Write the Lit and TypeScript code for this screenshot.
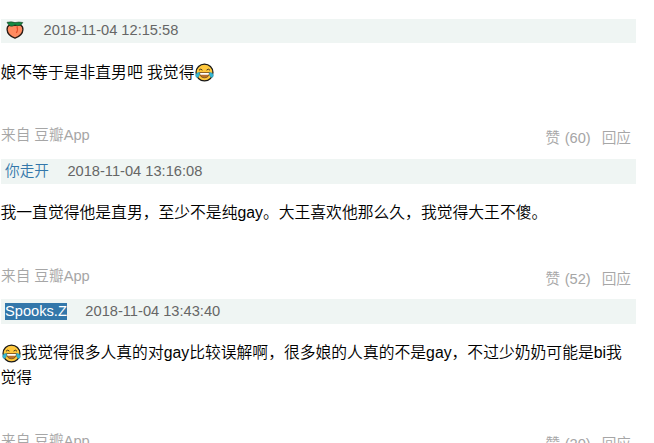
import { LitElement, html, css, svg } from "lit";
import { customElement, property } from "lit/decorators.js";

interface Comment {
  author: string;
  selected?: boolean;
  time: string;
  body: string;
  votes: number;
}

const comments: Comment[] = [
  { author: "🍑", time: "2018-11-04 12:15:58", body: "娘不等于是非直男吧 我觉得😂", votes: 60 },
  {
    author: "你走开",
    time: "2018-11-04 13:16:08",
    body: "我一直觉得他是直男，至少不是纯gay。大王喜欢他那么久，我觉得大王不傻。",
    votes: 52,
  },
  {
    author: "Spooks.Z",
    selected: true,
    time: "2018-11-04 13:43:40",
    body: "😂我觉得很多人真的对gay比较误解啊，很多娘的人真的不是gay，不过少奶奶可能是bi我觉得",
    votes: 20,
  },
];

const joyArt = svg`
  <circle cx="10" cy="10" r="8.9" fill="#ffc83d" stroke="#191919" stroke-width="1.3"/>
  <path d="M4.2 7.6Q5.9 5.4 7.8 7.5M12.2 7.5Q14.1 5.4 15.8 7.6" fill="none" stroke="#372b1b" stroke-width="1"/>
  <path d="M4.8 10.1H15.2Q14.8 15.6 10 15.6Q5.2 15.6 4.8 10.1Z" fill="#b8702a" stroke="#5b3b18" stroke-width=".7"/>
  <path d="M5.3 10.5H14.7L14.3 12.3H5.7Z" fill="#fff"/>
  <path d="M4.9 9.8Q1 10.1.6 13Q.8 15.8 3 15.2Q5.1 14.2 4.9 9.8ZM15.1 9.8Q19 10.1 19.4 13Q19.2 15.8 17 15.2Q14.9 14.2 15.1 9.8Z" fill="#35b8d5" stroke="#20788e" stroke-width=".4"/>`;

const peachArt = svg`
  <path d="M9 4.4C4.6 2.2.9 4.6 1.1 8.6C1.3 12.6 5.1 15.7 9 17.1C12.9 15.7 16.7 12.6 16.9 8.6C17.1 4.6 13.4 2.2 9 4.4Z" fill="#ff8b60" stroke="#2b1b14" stroke-width="1.3"/>
  <path d="M10.9 5.3Q12.3 9 10.4 12" fill="none" stroke="#e34b29" stroke-width="1.1"/>
  <path d="M1 1.3Q5.8.3 9 1.6Q12.6.6 16.8 1.5Q15.2 5 11.4 4.7L9 3.8Q7 5.9 4.2 5Q2 3.8 1 1.3Z" fill="#158a43" stroke="#14371f" stroke-width=".6"/>`;

@customElement("emoji-glyph")
class EmojiGlyph extends LitElement {
  @property() kind = "joy";

  static styles = css`
    :host { display: inline-block; line-height: 0; }
    .joy { display: block; width: 19px; height: 19px; margin: 0 1px; }
    .peach { display: block; width: 18px; height: 18px; }
  `;

  render() {
    return this.kind === "peach"
      ? html`<svg class="peach" viewBox="0 0 18 18" role="img" aria-label="peach">${peachArt}</svg>`
      : html`<svg class="joy" viewBox="0 0 20 20" role="img" aria-label="joy">${joyArt}</svg>`;
  }
}

@customElement("comment-item")
class CommentItem extends LitElement {
  @property({ attribute: false }) comment!: Comment;

  static styles = css`
    :host { display: block; }
    .head {
      display: flex;
      align-items: center;
      gap: 18.5px;
      box-sizing: border-box;
      height: 24.4px;
      margin: 0 18px 0 1px;
      padding: 0 0 0.6px 4px;
      background: #eff5f3;
      color: #666;
      font-size: 14.65px;
      line-height: 17px;
    }
    .author { color: #37a; }
    .author emoji-glyph { display: block; margin: 0 1px 2px; }
    .selected { background: #37a; color: #fff; }
    .body {
      margin: 16.6px 30px 0 0;
      padding-left: 0.5px;
      color: #000;
      font-size: 15.8px;
      line-height: 25px;
      word-break: break-all;
    }
    .body emoji-glyph { vertical-align: middle; height: 19px; margin: -2px 0 0; }
    .foot {
      display: flex;
      justify-content: space-between;
      height: 24px;
      margin: 38.4px 23px 11.8px 1px;
      color: #a6a6a6;
      font-size: 14.65px;
      line-height: 24px;
    }
    .actions { display: flex; gap: 11px; padding-top: 3px; }
    .votes { word-spacing: 0.5px; }
  `;

  private rich(text: string) {
    return text.split(/(😂|🍑)/u).map((part) =>
      part === "😂" ? html`<emoji-glyph kind="joy"></emoji-glyph>`
      : part === "🍑" ? html`<emoji-glyph kind="peach"></emoji-glyph>`
      : part);
  }

  render() {
    const c = this.comment;
    return html`
      <div class="head">
        <span class="author ${c.selected ? "selected" : ""}">${this.rich(c.author)}</span>
        <span>${c.time}</span>
      </div>
      <div class="body">${this.rich(c.body)}</div>
      <div class="foot">
        <span>来自 豆瓣App</span>
        <div class="actions"><span class="votes">赞 (${c.votes})</span><span>回应</span></div>
      </div>
    `;
  }
}

@customElement("app-root")
class AppRoot extends LitElement {
  static styles = css`
    :host {
      display: block;
      box-sizing: border-box;
      height: 443px;
      padding-top: 19px;
      overflow: hidden;
      background: #fff;
      font-family: "Liberation Sans", "Noto Sans CJK SC", sans-serif;
      font-weight: 350;
    }
  `;

  render() {
    return comments.map((c) => html`<comment-item .comment=${c}></comment-item>`);
  }
}
